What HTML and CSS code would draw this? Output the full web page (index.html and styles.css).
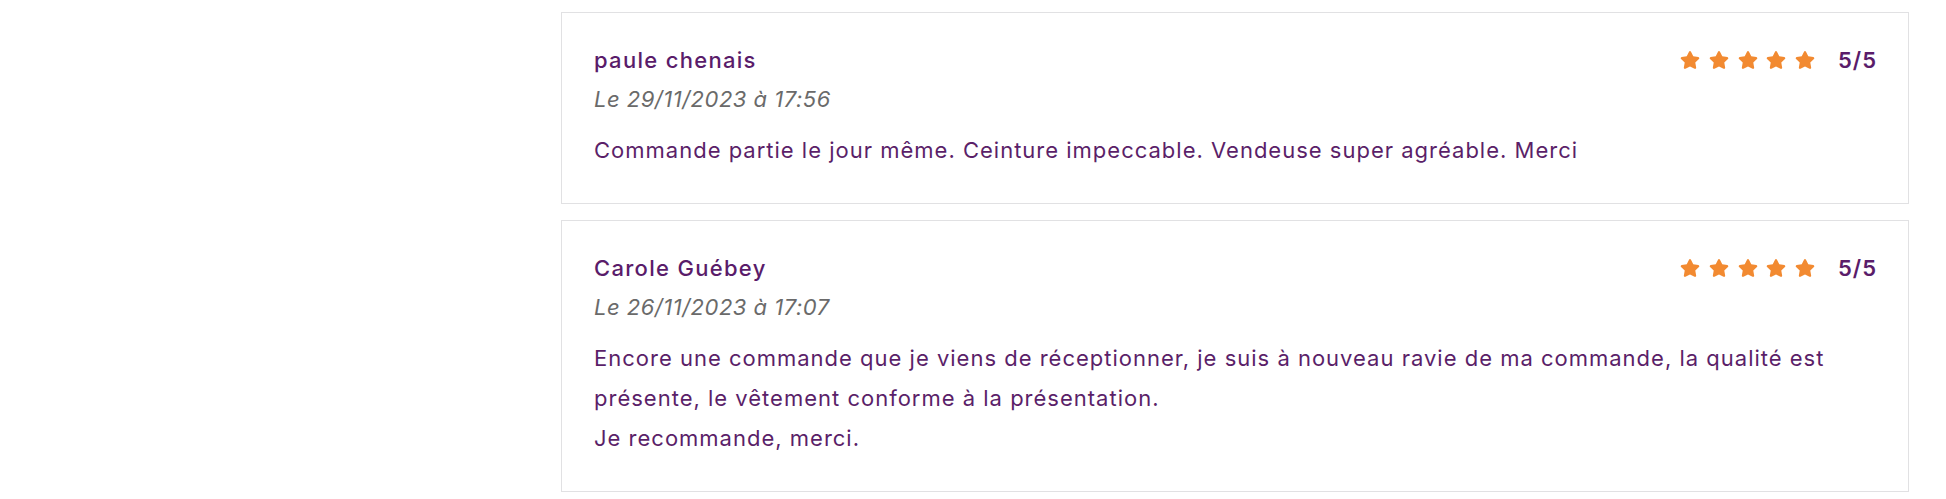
FILE: index.html
```html
<!DOCTYPE html>
<html lang="fr">
<head>
<meta charset="utf-8">
<title>Avis clients</title>
<link rel="stylesheet" href="styles.css">
</head>
<body>
<div class="page">
  <aside class="side"></aside>
  <main class="reviews">
    <article class="review">
      <div class="review-head">
        <div class="author">paule chenais</div>
        <div class="rating">
          <span class="stars">
            <svg class="star" viewBox="0 0 576 512"><path d="M259.3 17.8L194 150.2 47.9 171.5c-26.2 3.8-36.7 36.1-17.7 54.6l105.7 103-25 145.5c-4.5 26.3 23.2 46 46.4 33.7L288 439.6l130.7 68.7c23.2 12.2 50.9-7.4 46.4-33.7l-25-145.5 105.7-103c19-18.5 8.5-50.8-17.7-54.6L382 150.2 316.7 17.8c-11.7-23.6-45.6-23.9-57.4 0z"/></svg>
            <svg class="star" viewBox="0 0 576 512"><path d="M259.3 17.8L194 150.2 47.9 171.5c-26.2 3.8-36.7 36.1-17.7 54.6l105.7 103-25 145.5c-4.5 26.3 23.2 46 46.4 33.7L288 439.6l130.7 68.7c23.2 12.2 50.9-7.4 46.4-33.7l-25-145.5 105.7-103c19-18.5 8.5-50.8-17.7-54.6L382 150.2 316.7 17.8c-11.7-23.6-45.6-23.9-57.4 0z"/></svg>
            <svg class="star" viewBox="0 0 576 512"><path d="M259.3 17.8L194 150.2 47.9 171.5c-26.2 3.8-36.7 36.1-17.7 54.6l105.7 103-25 145.5c-4.5 26.3 23.2 46 46.4 33.7L288 439.6l130.7 68.7c23.2 12.2 50.9-7.4 46.4-33.7l-25-145.5 105.7-103c19-18.5 8.5-50.8-17.7-54.6L382 150.2 316.7 17.8c-11.7-23.6-45.6-23.9-57.4 0z"/></svg>
            <svg class="star" viewBox="0 0 576 512"><path d="M259.3 17.8L194 150.2 47.9 171.5c-26.2 3.8-36.7 36.1-17.7 54.6l105.7 103-25 145.5c-4.5 26.3 23.2 46 46.4 33.7L288 439.6l130.7 68.7c23.2 12.2 50.9-7.4 46.4-33.7l-25-145.5 105.7-103c19-18.5 8.5-50.8-17.7-54.6L382 150.2 316.7 17.8c-11.7-23.6-45.6-23.9-57.4 0z"/></svg>
            <svg class="star" viewBox="0 0 576 512"><path d="M259.3 17.8L194 150.2 47.9 171.5c-26.2 3.8-36.7 36.1-17.7 54.6l105.7 103-25 145.5c-4.5 26.3 23.2 46 46.4 33.7L288 439.6l130.7 68.7c23.2 12.2 50.9-7.4 46.4-33.7l-25-145.5 105.7-103c19-18.5 8.5-50.8-17.7-54.6L382 150.2 316.7 17.8c-11.7-23.6-45.6-23.9-57.4 0z"/></svg>
          </span>
          <span class="score">5/5</span>
        </div>
      </div>
      <div class="date">Le 29/11/2023 à 17:56</div>
      <p class="text">Commande partie le jour même. Ceinture impeccable. Vendeuse super agréable. Merci</p>
    </article>
    <article class="review">
      <div class="review-head">
        <div class="author">Carole Guébey</div>
        <div class="rating">
          <span class="stars">
            <svg class="star" viewBox="0 0 576 512"><path d="M259.3 17.8L194 150.2 47.9 171.5c-26.2 3.8-36.7 36.1-17.7 54.6l105.7 103-25 145.5c-4.5 26.3 23.2 46 46.4 33.7L288 439.6l130.7 68.7c23.2 12.2 50.9-7.4 46.4-33.7l-25-145.5 105.7-103c19-18.5 8.5-50.8-17.7-54.6L382 150.2 316.7 17.8c-11.7-23.6-45.6-23.9-57.4 0z"/></svg>
            <svg class="star" viewBox="0 0 576 512"><path d="M259.3 17.8L194 150.2 47.9 171.5c-26.2 3.8-36.7 36.1-17.7 54.6l105.7 103-25 145.5c-4.5 26.3 23.2 46 46.4 33.7L288 439.6l130.7 68.7c23.2 12.2 50.9-7.4 46.4-33.7l-25-145.5 105.7-103c19-18.5 8.5-50.8-17.7-54.6L382 150.2 316.7 17.8c-11.7-23.6-45.6-23.9-57.4 0z"/></svg>
            <svg class="star" viewBox="0 0 576 512"><path d="M259.3 17.8L194 150.2 47.9 171.5c-26.2 3.8-36.7 36.1-17.7 54.6l105.7 103-25 145.5c-4.5 26.3 23.2 46 46.4 33.7L288 439.6l130.7 68.7c23.2 12.2 50.9-7.4 46.4-33.7l-25-145.5 105.7-103c19-18.5 8.5-50.8-17.7-54.6L382 150.2 316.7 17.8c-11.7-23.6-45.6-23.9-57.4 0z"/></svg>
            <svg class="star" viewBox="0 0 576 512"><path d="M259.3 17.8L194 150.2 47.9 171.5c-26.2 3.8-36.7 36.1-17.7 54.6l105.7 103-25 145.5c-4.5 26.3 23.2 46 46.4 33.7L288 439.6l130.7 68.7c23.2 12.2 50.9-7.4 46.4-33.7l-25-145.5 105.7-103c19-18.5 8.5-50.8-17.7-54.6L382 150.2 316.7 17.8c-11.7-23.6-45.6-23.9-57.4 0z"/></svg>
            <svg class="star" viewBox="0 0 576 512"><path d="M259.3 17.8L194 150.2 47.9 171.5c-26.2 3.8-36.7 36.1-17.7 54.6l105.7 103-25 145.5c-4.5 26.3 23.2 46 46.4 33.7L288 439.6l130.7 68.7c23.2 12.2 50.9-7.4 46.4-33.7l-25-145.5 105.7-103c19-18.5 8.5-50.8-17.7-54.6L382 150.2 316.7 17.8c-11.7-23.6-45.6-23.9-57.4 0z"/></svg>
          </span>
          <span class="score">5/5</span>
        </div>
      </div>
      <div class="date">Le 26/11/2023 à 17:07</div>
      <p class="text">Encore une commande que je viens de réceptionner, je suis à nouveau ravie de ma commande, la qualité est présente, le vêtement conforme à la présentation.<br>Je recommande, merci.</p>
    </article>
  </main>
</div>
</body>
</html>
```

FILE: styles.css
```css
html, body {
  margin: 0;
  padding: 0;
  background: #ffffff;
}

body {
  font-family: Inter, "Open Sans", "Liberation Sans", sans-serif;
  color: #5b1f69;
}

.page {
  display: flex;
  padding-top: 12px;
}

.side {
  flex: 0 0 561px;
}

.reviews {
  flex: 0 0 1348px;
  display: flex;
  flex-direction: column;
  gap: 16px;
}

.review {
  border: 1px solid #e1e1e3;
  padding: 32px 32px 33px 32px;
}

.review-head {
  display: flex;
  justify-content: space-between;
  align-items: center;
  height: 30px;
}

.author {
  font-size: 22px;
  font-weight: 500;
  line-height: 30px;
  letter-spacing: 1.3px;
  color: #5a1c6a;
}

.rating {
  display: flex;
  align-items: center;
  gap: 23px;
}

.stars {
  display: flex;
  gap: 8.7px;
}

.star {
  width: 20px;
  height: 18px;
  fill: #f28a31;
  display: block;
}

.score {
  font-size: 22px;
  font-weight: 600;
  line-height: 30px;
  letter-spacing: 1px;
  margin-right: -1px;
  color: #5a1c6a;
}

.date {
  margin-top: 9px;
  font-size: 22px;
  line-height: 30px;
  font-style: italic;
  letter-spacing: 0.5px;
  color: #6a6a6a;
}

.text {
  margin: 16px 0 0 0;
  font-size: 22px;
  line-height: 40px;
  letter-spacing: 1px;
  color: #5b1f69;
}
```
